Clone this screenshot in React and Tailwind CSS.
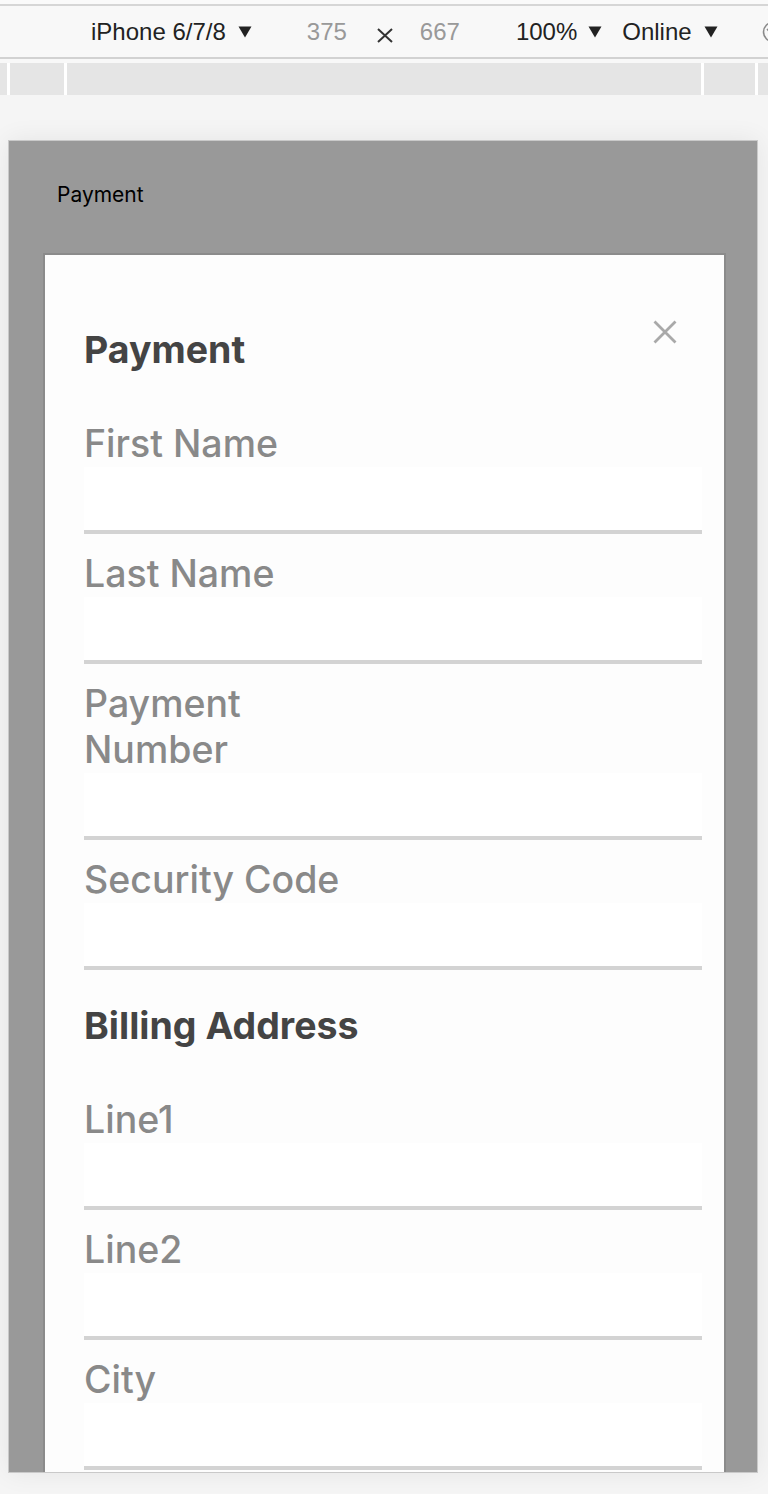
import React from "react";

function Tri() {
  return (
    <svg width="14" height="12" viewBox="0 0 14 12" className="shrink-0">
      <path d="M0.5 0.5 H13.5 L7 11.5 Z" fill="#222" />
    </svg>
  );
}

function Field({ label }) {
  return (
    <div className="pt-[17px]">
      <div className="w-[270px] text-[37.5px] leading-[46px] font-medium text-[#898989]">{label}</div>
      <div className="h-[63px] bg-white" />
      <div className="h-[4px] bg-[#d3d3d3]" />
    </div>
  );
}

export default function App() {
  return (
    <div className="w-[768px] h-[1494px] overflow-hidden bg-[#f5f5f5] font-['Liberation_Sans',Arial,sans-serif]">
      {/* devtools toolbar */}
      <div className="h-[4px] bg-[#fafafa]" />
      <div className="h-[2px] bg-[#d6d6d6]" />
      <div className="h-[51px] bg-[#f8f8f8] flex items-center text-[24px] leading-[28px] whitespace-nowrap overflow-hidden">
        <span className="ml-[91px] text-[#222]">iPhone 6/7/8</span>
        <span className="ml-[12px] flex items-center"><Tri /></span>
        <span className="ml-[55px] text-[#999]">375</span>
        <span className="ml-[30px] mt-[8px] shrink-0">
          <svg width="16" height="15" viewBox="0 0 16 15">
            <path d="M1 1 L15 14 M15 1 L1 14" stroke="#333" strokeWidth="2" />
          </svg>
        </span>
        <span className="ml-[27px] text-[#999]">667</span>
        <span className="ml-[56px] text-[#222]">100%</span>
        <span className="ml-[11px] flex items-center"><Tri /></span>
        <span className="ml-[20px] text-[#222]">Online</span>
        <span className="ml-[12px] flex items-center"><Tri /></span>
        <span className="ml-[44px] shrink-0 flex items-center">
          <svg width="22" height="22" viewBox="0 0 22 22">
            <circle cx="11" cy="11" r="9.5" fill="none" stroke="#8a8a8a" strokeWidth="1.6" />
            <path d="M5 8 L14 17" stroke="#8a8a8a" strokeWidth="1.6" />
          </svg>
        </span>
      </div>
      <div className="h-[2px] bg-[#d2d2d2]" />
      <div className="h-[4px] bg-[#f8f8f8]" />
      {/* ruler */}
      <div className="h-[32px] flex bg-[#e5e5e5]">
        <div className="w-[7px]" />
        <div className="w-[3px] bg-white" />
        <div className="w-[54px]" />
        <div className="w-[3px] bg-white" />
        <div className="w-[634px]" />
        <div className="w-[3px] bg-white" />
        <div className="w-[51px]" />
        <div className="w-[3px] bg-white" />
        <div className="flex-1" />
      </div>

      {/* page */}
      <div className="pt-[45px] pl-[8px]">
        <div className="w-[750px] h-[1333px] bg-[#999999] border border-[#c9c9c9] overflow-hidden shadow-[0_0_24px_rgba(0,0,0,0.07)] font-['Inter','Noto_Sans',sans-serif]">
          <div className="pl-[48px] pt-[41px] text-[21px] leading-[26px] text-black">Payment</div>
          <div className="relative mt-[45px] ml-[34px] w-[683px] border-2 border-[#8b8b8b] bg-[#fdfdfd] pl-[39px] pr-[22px] pt-[72px] pb-[40px]">
            <button className="absolute top-[65px] right-[47px] w-[24px] h-[24px]" aria-label="Close">
              <svg width="24" height="24" viewBox="0 0 24 24">
                <path d="M1.5 1.5 L22.5 22.5 M22.5 1.5 L1.5 22.5" stroke="#a9a9a9" strokeWidth="2.8" />
              </svg>
            </button>
            <div className="text-[37.5px] leading-[46px] font-bold text-[#444] mb-[31px]">Payment</div>
            <Field label="First Name" />
            <Field label="Last Name" />
            <Field label="Payment Number" />
            <Field label="Security Code" />
            <div className="mt-[33px] text-[37.5px] leading-[46px] font-bold text-[#444] mb-[31px]">Billing Address</div>
            <Field label="Line1" />
            <Field label="Line2" />
            <Field label="City" />
          </div>
        </div>
      </div>
    </div>
  );
}
